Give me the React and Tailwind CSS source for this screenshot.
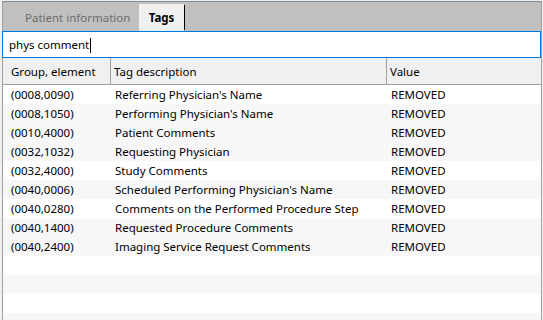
const rows = [
  ['(0008,0090)', "Referring Physician's Name"],
  ['(0008,1050)', "Performing Physician's Name"],
  ['(0010,4000)', 'Patient Comments'],
  ['(0032,1032)', 'Requesting Physician'],
  ['(0032,4000)', 'Study Comments'],
  ['(0040,0006)', "Scheduled Performing Physician's Name"],
  ['(0040,0280)', 'Comments on the Performed Procedure Step'],
  ['(0040,1400)', 'Requested Procedure Comments'],
  ['(0040,2400)', 'Imaging Service Request Comments'],
]

const shaded = [false, true, true, true, false, true, false, true, true, false, true, false, true]

export default function App() {
  return (
    <div
      className="w-[543px] h-[320px] bg-[#f0f0f0] pt-[1px] pl-[2px] pr-[1px] flex flex-col overflow-hidden text-[11.5px] text-black"
      style={{ fontFamily: '"Segoe UI", "Noto Sans", sans-serif' }}
    >
      <div className="flex-1 flex flex-col border-l border-t border-r border-l-[#a0a0a0] border-r-[#a0a0a0] border-t-[#7f8e9b] min-h-0">
        {/* tabs */}
        <div className="h-[29px] bg-[#c0c0c0] flex items-end shrink-0">
          <div className="h-[27px] w-[136px] pl-[22px] pt-[1px] flex items-center text-[#6d6d6d]">Patient information</div>
          <div className="h-[27px] w-[45px] bg-[#f0f0f0] pt-[1px] flex items-center justify-center font-bold">Tags</div>
          <div className="w-px h-[25px] bg-black mb-[1px]"></div>
        </div>

        {/* search */}
        <div className="h-[27px] border border-[#0078d7] bg-white flex items-center pl-[6px] pt-[1px] shrink-0 -ml-px">
          <span>phys comment</span>
          <span className="w-px h-[15px] bg-black ml-[1px]"></span>
        </div>

        {/* header */}
        <div className="h-[27px] bg-[#f0f0f0] border-b border-[#a0a0a0] flex shrink-0">
          <div className="w-[108px] pl-[8px] pt-[1px] flex items-center border-r border-[#a0a0a0]">Group, element</div>
          <div className="w-[276px] pl-[3px] pt-[1px] flex items-center border-r border-[#a0a0a0]">Tag description</div>
          <div className="flex-1 pl-[3px] pt-[1px] flex items-center">Value</div>
        </div>

        {/* rows */}
        <div className="flex-1 flex flex-col bg-white">
          {shaded.map((s, i) => {
            const r = rows[i]
            return (
              <div key={i} className={`h-[19px] pt-[1px] flex items-center shrink-0 ${s ? 'bg-[#f7f7f7]' : 'bg-white'}`}>
                <div className="w-[108px] pl-[8px]">{r ? r[0] : ''}</div>
                <div className="w-[276px] pl-[4px]">{r ? r[1] : ''}</div>
                <div className="flex-1 pl-[4px]">{r ? 'REMOVED' : ''}</div>
              </div>
            )
          })}
        </div>
      </div>
    </div>
  )
}
